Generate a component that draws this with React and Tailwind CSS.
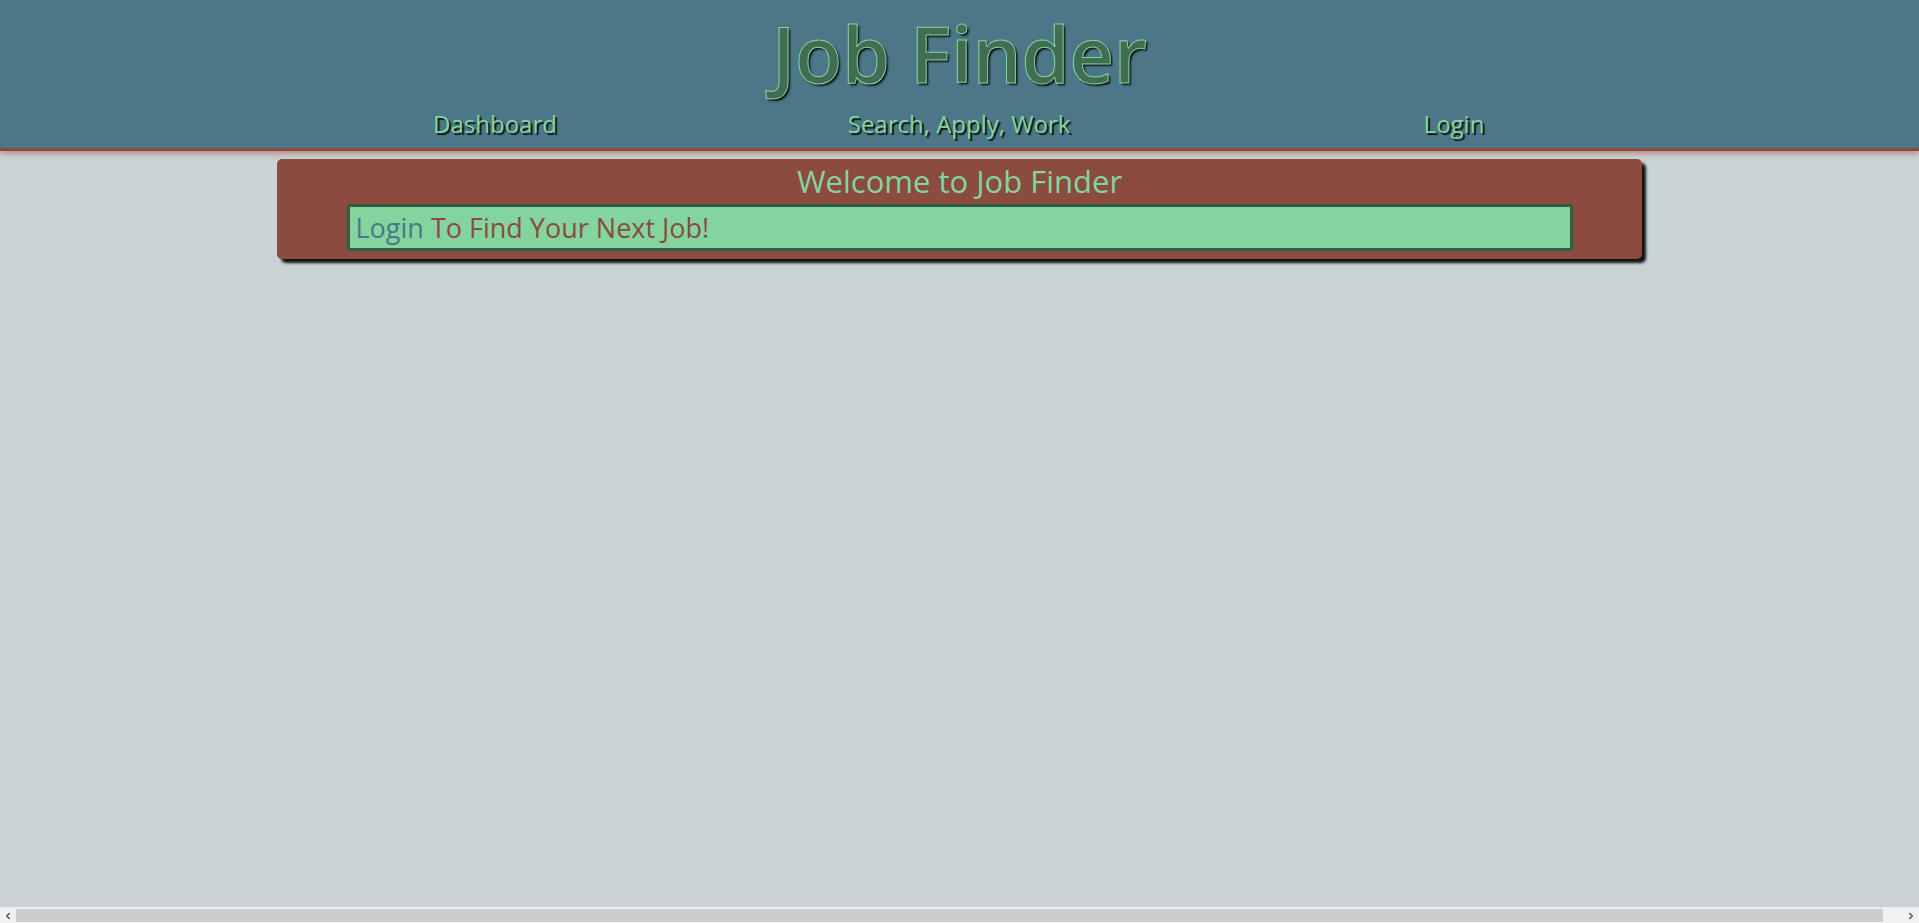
import { ChevronLeft, ChevronRight } from 'lucide-react'

export default function App() {
    const links = ['Dashboard', 'Search, Apply, Work', 'Login']

    return (
        <div
            className="flex h-screen w-full flex-col overflow-hidden bg-[#cad3d6]"
            style={{ fontFamily: '"Segoe UI", "Open Sans", "Noto Sans", sans-serif' }}
        >
            {/* header */}
            <header className="h-[151px] shrink-0 bg-[#4b7788] border-b-[3px] border-[#8b4a3f] shadow-[0_3px_6px_#b98c84]">
                <h1 className="pt-[6px] text-center text-[77px] leading-[96px] font-semibold text-[#416d52] [-webkit-text-stroke:1px_#84d49f] [text-shadow:2px_2px_2px_#111]">
                    Job Finder
                </h1>
                <nav className="grid grid-cols-[464px_464px_526px] pl-[263px] mt-[6px]">
                    {links.map((link) => (
                        <a
                            key={link}
                            href="#"
                            className="text-center text-[24px] leading-[32px] text-[#84d49f] [text-shadow:2px_2px_1px_#111]"
                        >
                            {link}
                        </a>
                    ))}
                </nav>
            </header>

            {/* welcome card */}
            <main className="flex-1 pt-[8px]">
                <section className="mx-auto w-[1365px] rounded-[5px] bg-[#8b4b3f] pb-[8px] shadow-[4px_4px_3px_#111]">
                    <h2 className="text-center text-[31px] leading-[45px] text-[#84d49f]">
                        Welcome to Job Finder
                    </h2>
                    <div className="mx-auto w-[1226px] rounded-[3px] border-[3px] border-[#2f5e45] bg-[#84d49f] px-[6px] text-[27px] leading-[41px]">
                        <a href="#" className="text-[#4b7788]">Login</a>
                        <span className="text-[#8b4b3f]"> To Find Your Next Job!</span>
                    </div>
                </section>
            </main>

            {/* horizontal scrollbar of the window */}
            <div className="flex h-[16px] shrink-0 border-t border-[#e8ecee] bg-[#f1f1f1] text-[#505050]">
                <span className="flex w-[16px] items-center justify-center">
                    <ChevronLeft size={10} strokeWidth={3.5} />
                </span>
                <div className="my-[1px] flex-1 bg-[#cdcdcd]" />
                <div className="w-[20px]" />
                <span className="flex w-[16px] items-center justify-center">
                    <ChevronRight size={10} strokeWidth={3.5} />
                </span>
            </div>
        </div>
    )
}
